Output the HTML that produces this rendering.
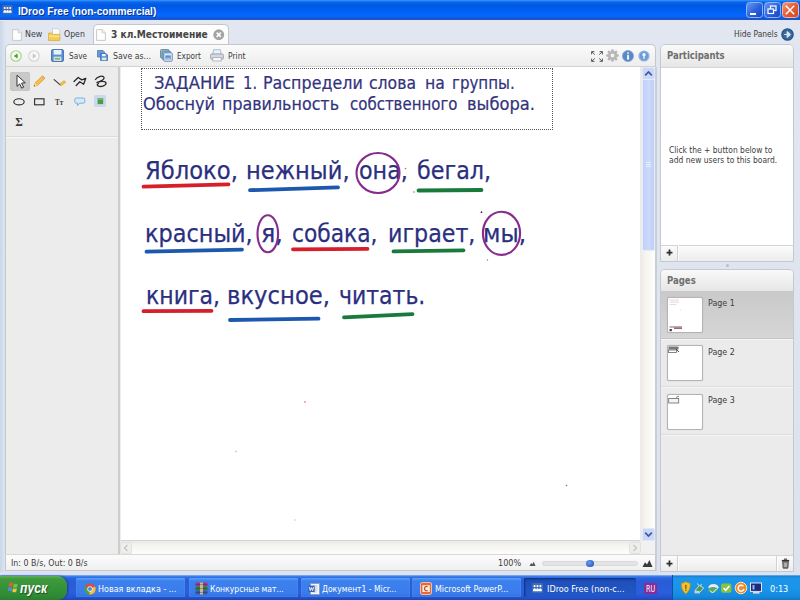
<!DOCTYPE html>
<html lang="ru">
<head>
<meta charset="utf-8">
<title>IDroo Free (non-commercial)</title>
<style>
html,body{margin:0;padding:0;}
body{width:800px;height:600px;overflow:hidden;position:relative;background:#dfe5ef;font-family:"DejaVu Sans Condensed","Liberation Sans",sans-serif;font-size:9px;color:#333;}
.a{position:absolute;white-space:nowrap;}
.l{position:absolute;white-space:nowrap;transform-origin:0 0;}
.t{position:absolute;white-space:nowrap;line-height:12px;height:12px;}
#titlebar{left:0;top:0;width:800px;height:20px;background:linear-gradient(#3b97ff 0,#0a68ee 2px,#0058e0 5px,#005ff0 10px,#0568ff 16px,#0a5ae0 18px,#1a4ec4 19px,#2a5acc 20px);}
#titletext{left:17px;top:3px;color:#fff;font-family:"Liberation Sans",sans-serif;font-weight:bold;font-size:10.5px;line-height:14px;text-shadow:1px 1px 1px #0a2a80;}
.wb{position:absolute;top:1.5px;width:16.5px;height:16.5px;border-radius:3.5px;box-sizing:border-box;border:1.2px solid #8fb4f6;background:linear-gradient(135deg,#6a98f2,#2a60dc 55%,#1a48c4);}
#appbg{left:0;top:20px;width:800px;height:555px;background:linear-gradient(#e1e6f0,#dde3ee);}
#leftedge{left:0;top:21px;width:5px;height:551px;background:linear-gradient(90deg,#c9d7e9,#dde5ef);}
#toolbar{left:5px;top:44px;width:651px;height:23px;box-sizing:border-box;border:1px solid #c2c7ce;border-bottom:1px solid #d2d2d2;border-radius:5px 5px 0 0;background:linear-gradient(#fbfbfb,#ededed);}
#tab{left:93px;top:24px;width:136px;height:21px;box-sizing:border-box;border:1px solid #c2c7ce;border-bottom:none;border-radius:5px 5px 0 0;background:linear-gradient(#ffffff,#fafafa);}
#leftpanel{left:5px;top:67px;width:115px;height:487px;background:#ececec;border-left:1px solid #c4c9d0;border-right:2px solid #cdcdcd;box-sizing:border-box;}
#canvas{left:120px;top:67px;width:520px;border-left:1px solid #ededed;height:474px;background:#fff;border-bottom:1px solid #d4d4d4;box-sizing:border-box;}
#vscroll{left:640px;top:67px;width:15px;height:474px;background:linear-gradient(90deg,#ebeae7,#f6f5f1 40%,#fdfdfb);}
#hscroll{left:120px;top:541px;width:521px;height:13px;background:linear-gradient(#ebeae7,#f6f5f1 40%,#fdfdfb);}
#status{left:5px;top:554px;width:651px;height:17px;box-sizing:border-box;border:1px solid #c4c9d0;border-top:1px solid #d8d8d8;background:linear-gradient(#fcfcfc,#f0f0f0);}
.panel{position:absolute;left:660px;width:134px;box-sizing:border-box;border:1px solid #c4c9d0;background:#ebebeb;overflow:hidden;}
.phead{position:absolute;left:0;top:0;width:100%;height:22px;background:linear-gradient(#f9f9f9,#e6e6e6);border-bottom:1px solid #d6d6d6;box-sizing:border-box;}
.pfoot{position:absolute;left:0;bottom:0;width:100%;height:16px;background:linear-gradient(#fbfbfb,#ececec);border-top:1px solid #d4d4d4;box-sizing:border-box;}
.ph{position:absolute;left:7px;top:5px;font-family:"Liberation Sans",sans-serif;font-weight:bold;font-size:10px;line-height:12px;color:#666;}
#taskbar{left:0;top:575px;width:800px;height:25px;background:linear-gradient(#a8c4f4 0,#3f86ee 1px,#2a66e0 3px,#2a5cd8 6px,#2b5edc 18px,#2450c8 23px,#1f46b4 25px);}
#start{left:0;top:576px;width:67px;height:24px;border-radius:0 9px 9px 0;background:linear-gradient(#5fb05a 0,#3f9a3c 3px,#36923a 12px,#2f8a34 20px,#2a7a30 25px);box-shadow:1px 0 2px #1a3f90;}
.tb{position:absolute;top:578px;height:19px;width:109px;border-radius:2px;background:linear-gradient(#5a9cf4,#3c80ee 3px,#3a7cec 15px,#3272e0);box-shadow:inset 0 0 1px #8fbcff;}
.tb.act{background:linear-gradient(#1c47aa,#1f50bc 4px,#2258c8);box-shadow:inset 1px 1px 2px #10307a;}
.tbt{position:absolute;top:3px;left:23px;color:#fff;font-size:9px;line-height:12px;white-space:nowrap;}
#tray{left:672px;top:575px;width:128px;height:25px;background:linear-gradient(#9cc8f0 0,#1a7ed4 1px,#1c96ea 3px,#1a94e8 14px,#158ae0 21px,#1278c8 25px);border-left:1px solid #0a4fa8;box-sizing:border-box;}

.hd{position:absolute;white-space:nowrap;transform-origin:0 0;font-size:18.2px;line-height:22px;height:22px;color:#33337d;-webkit-text-stroke:0.2px #33337d;}
.w{position:absolute;white-space:nowrap;transform-origin:0 0;font-size:25px;line-height:30px;height:30px;color:#2b2f80;-webkit-text-stroke:0.25px #2b2f80;}
#dotbox{left:141px;top:68px;width:412px;height:62px;box-sizing:border-box;border:1px dotted #555;}
.thumb{position:absolute;left:5.600px;width:36px;height:36px;box-sizing:border-box;border:1px solid #b4b4b4;background:#fff;border-radius:2px;box-shadow:0 0 1px #aaa;overflow:hidden;}
</style>
</head>
<body>
<div class="a" id="appbg"></div>
<div class="a" id="titlebar"></div>
<div class="a" id="leftedge"></div>
<div class="a" id="tab"></div>
<div class="a" id="toolbar"></div>
<!-- title icon and buttons -->
<svg class="a" style="left:2px;top:5px;" width="11" height="9.500" viewBox="0 0 11 10"><rect width="11" height="10" rx="1.2" fill="#3d6cb4"/><circle cx="2.6" cy="3.1" r="1.1" fill="#fff"/><circle cx="5.5" cy="3.1" r="1.1" fill="#fff"/><circle cx="8.4" cy="3.1" r="1.1" fill="#fff"/><path d="M1 8.2q0-3 1.6-3t1.5 1.8q0-1.8 1.4-1.800t1.400 1.800q0-1.800 1.500-1.800t1.600 3z" fill="#fff"/></svg>
<div class="wb" style="left:746px;"></div>
<div class="a" style="left:750px;top:12.500px;width:6px;height:2px;background:#fff;"></div>
<div class="wb" style="left:764px;"></div>
<svg class="a" style="left:767px;top:5px;" width="10" height="10" viewBox="0 0 10 10"><rect x="3.500" y="1" width="5.500" height="4.500" fill="none" stroke="#fff" stroke-width="1.200"/><rect x="1" y="4" width="5.500" height="4.500" fill="#2a5bd8" stroke="#fff" stroke-width="1.200"/></svg>
<div class="wb" style="left:782px;border-color:#f0b8a8;background:linear-gradient(135deg,#f09a78,#e4603a 45%,#d04a22);"></div>
<svg class="a" style="left:785px;top:5px;" width="10" height="10" viewBox="0 0 10 10"><path d="M0.800 0.800l8.400 8.400M9.200 0.800l-8.400 8.400" stroke="#fff" stroke-width="1.500"/></svg>
<!-- tab row icons -->
<svg class="a" style="left:11.500px;top:28.500px;" width="10" height="12" viewBox="0 0 10 12"><path d="M0.6 0.6h5.6l3.2 3.2v7.600h-8.800z" fill="#fdfdfd" stroke="#c4c4c4" stroke-width="0.9"/><path d="M6.200 0.600v3.200h3.200" fill="#ececec" stroke="#c4c4c4" stroke-width="0.7"/></svg>
<svg class="a" style="left:48px;top:28px;" width="13" height="13" viewBox="0 0 13 13"><path d="M4.500 0.600h5l2.200 2.200v5.500h-7.200z" fill="#fdfdfd" stroke="#c8c8c8" stroke-width="0.800"/><path d="M0.600 5.200h3.600l1 1.200h6.600v6h-11.200z" fill="#f6cf5a" stroke="#d9a92a" stroke-width="0.800"/><path d="M0.900 8.200h10.600" stroke="#fbe6a0" stroke-width="1.200"/></svg>
<svg class="a" style="left:95.500px;top:28.500px;" width="10" height="12" viewBox="0 0 10 12"><path d="M0.6 0.6h5.6l3.2 3.2v7.600h-8.800z" fill="#fdfdfd" stroke="#c4c4c4" stroke-width="0.9"/><path d="M6.200 0.600v3.200h3.200" fill="#ececec" stroke="#c4c4c4" stroke-width="0.7"/></svg>
<svg class="a" style="left:213px;top:28.700px;" width="11.500" height="11.500" viewBox="0 0 12 12"><circle cx="6" cy="6" r="5.700" fill="#a4a4a4"/><path d="M3.800 3.800l4.400 4.400M8.200 3.800l-4.400 4.400" stroke="#fff" stroke-width="1.600"/></svg>
<svg class="a" style="left:780.500px;top:27.800px;" width="13" height="13" viewBox="0 0 13 13"><circle cx="6.500" cy="6.500" r="6.300" fill="#2c5688"/><circle cx="6.500" cy="6.500" r="4.800" fill="#3a6a9e"/><path d="M3.200 6.500h4M6.200 3.800l3 2.700-3 2.700z" fill="#dbe6f2" stroke="#dbe6f2" stroke-width="1.200" stroke-linejoin="round"/></svg>
<!-- toolbar icons -->
<svg class="a" style="left:10px;top:49.500px;" width="12" height="12" viewBox="0 0 12 12"><circle cx="6" cy="6" r="5.300" fill="#f2f8ee" stroke="#a6d28c" stroke-width="1.100"/><path d="M7.600 3.400v5.200l-3.800-2.600z" fill="#4a9a3a"/></svg>
<svg class="a" style="left:27.500px;top:49.500px;" width="12" height="12" viewBox="0 0 12 12"><circle cx="6" cy="6" r="5.300" fill="#f6f6f6" stroke="#d4d4d4" stroke-width="1.100"/><path d="M4.800 3.600v4.800l3.400-2.400z" fill="#c4c4c4"/></svg>
<svg class="a" style="left:51px;top:49px;" width="13" height="13" viewBox="0 0 13 13"><rect x="0.500" y="0.500" width="12" height="12" rx="1.500" fill="#5a8fd4" stroke="#3f6fb4" stroke-width="0.900"/><rect x="2.600" y="1" width="7.800" height="4.600" fill="#e8f0fa"/><rect x="2.600" y="7.600" width="7.800" height="4.400" fill="#cfe0cf"/><rect x="4" y="9" width="5" height="1.600" fill="#7ab87a"/></svg>
<svg class="a" style="left:97px;top:50px;" width="11" height="11" viewBox="0 0 11 11"><path d="M0.500 0.500h5.500l1.500 1.500v5h-7z" fill="#6a9ad8" stroke="#4a78b8" stroke-width="0.800"/><path d="M3.500 3.500h5.500l1.500 1.500v5.500h-7z" fill="#5a8fd4" stroke="#3f6fb4" stroke-width="0.800"/><rect x="5" y="4" width="3.600" height="2.200" fill="#eef4fb"/><rect x="4.800" y="7.600" width="4.600" height="2.600" fill="#d8ead8"/></svg>
<svg class="a" style="left:159.500px;top:49px;" width="13" height="13" viewBox="0 0 13 13"><rect x="0.500" y="0.500" width="8.500" height="8.500" rx="1" fill="#9ac49a" stroke="#5a7ab0" stroke-width="0.800"/><rect x="2.200" y="2.200" width="8.500" height="8.500" rx="1" fill="#8ab0de" stroke="#5a7ab0" stroke-width="0.800"/><rect x="3.800" y="3.800" width="8.500" height="8.500" rx="1" fill="#dce8f6" stroke="#5a7ab0" stroke-width="0.800"/><rect x="5.400" y="6.400" width="5.400" height="4" fill="#5a8fd4"/><rect x="6.300" y="8.600" width="3.600" height="1.400" fill="#a8d0a8"/></svg>
<svg class="a" style="left:210px;top:49px;" width="14" height="13" viewBox="0 0 14 13"><path d="M3.600 0.700h6.800l0.800 4.500h-8.400z" fill="#eaf2fa" stroke="#9ab0c8" stroke-width="0.800"/><rect x="0.600" y="5" width="12.800" height="5.200" rx="1.200" fill="#d6dade" stroke="#8f979f" stroke-width="0.800"/><rect x="2.800" y="8.400" width="8.400" height="3.600" fill="#f8f8f8" stroke="#9aa2aa" stroke-width="0.700"/></svg>
<svg class="a" style="left:591px;top:50.500px;" width="12" height="11" viewBox="0 0 12 11"><g stroke="#5a5a5a" stroke-width="1" fill="none"><path d="M0.600 3.400v-2.800h2.800M0.800 0.800l3 2.800"/><path d="M11.400 3.400v-2.800h-2.800M11.200 0.800l-3 2.800"/><path d="M0.600 7.600v2.800h2.800M0.800 10.200l3-2.800"/><path d="M11.400 7.600v2.800h-2.800M11.200 10.200l-3-2.800"/></g></svg>
<svg class="a" style="left:605.500px;top:49px;" width="13" height="13" viewBox="0 0 13 13"><g fill="#b6b6b6"><circle cx="6.500" cy="6.500" r="4.600"/><rect x="5.200" y="0.200" width="2.600" height="12.600" rx="0.800"/><rect x="5.200" y="0.200" width="2.600" height="12.600" rx="0.800" transform="rotate(45 6.500 6.500)"/><rect x="5.200" y="0.200" width="2.600" height="12.600" rx="0.800" transform="rotate(90 6.500 6.500)"/><rect x="5.200" y="0.200" width="2.600" height="12.600" rx="0.800" transform="rotate(135 6.500 6.500)"/></g><circle cx="6.500" cy="6.500" r="1.900" fill="#f2f2f2"/></svg>
<svg class="a" style="left:622px;top:49.500px;" width="12" height="12" viewBox="0 0 12 12"><circle cx="6" cy="6" r="5.600" fill="#5b89c6"/><circle cx="6" cy="6" r="5.600" fill="none" stroke="#86a9da" stroke-width="0.800"/><rect x="5.300" y="2.300" width="1.500" height="1.500" fill="#fff"/><path d="M5.300 4.800h1.500l0.300 4.600h-2.100z" fill="#fff"/></svg>
<svg class="a" style="left:637.500px;top:49.500px;" width="12" height="12" viewBox="0 0 12 12"><circle cx="6" cy="6" r="5.600" fill="#8fb2e0"/><circle cx="6" cy="6" r="4.200" fill="#6e9ad4"/><circle cx="6" cy="4.800" r="1.700" fill="#f4f8fd"/><rect x="5.300" y="6.200" width="1.400" height="2.600" fill="#f4f8fd"/></svg>
<div class="a" id="leftpanel"></div>
<div class="a" style="left:6px;top:136px;width:112px;height:1px;background:#dcdcdc;"></div>
<div class="a" style="left:6px;top:137px;width:112px;height:1px;background:#f8f8f8;"></div>
<div class="a" style="left:10px;top:72px;width:20px;height:19px;border-radius:3px;background:#c9c9c9;box-shadow:inset 0 0 1px #aaa;"></div>
<svg class="a" style="left:6px;top:68px;" width="112" height="64" viewBox="6 68 112 64">
<!-- pointer -->
<path d="M17 75.200v11.200l2.700-2.500 2 4.300 1.900-0.900-2-4.200 3.700-0.300z" fill="#fff" stroke="#333" stroke-width="1" stroke-linejoin="round"/>
<!-- pencil -->
<path d="M34 86.300l1-3.200 7.600-7.300 2.400 2.400-7.700 7.300z" fill="#f2c348" stroke="#d79a2a" stroke-width="0.800" stroke-linejoin="round"/><path d="M34 86.300l1-3.200 2.300 2.400z" fill="#f7e2b8"/><path d="M34 86.300l0.500-1.400 0.900 0.900z" fill="#444"/><path d="M41.600 76.800l2.400 2.400" stroke="#e8a8a0" stroke-width="1.200"/>
<!-- line + pencil -->
<path d="M53.800 79.300l6.800 5.800" stroke="#333" stroke-width="1.100" fill="none"/><path d="M60 85.600l0.700-2.400 3.600-2.600 1.400 1.800-3.600 2.700z" fill="#f2c348" stroke="#d79a2a" stroke-width="0.600"/>
<!-- zigzag -->
<path d="M74 81.500l4.200-4 3.600 2.400 4-1.600-2.200 6-3.800-2.600-3.600 3.800" fill="none" stroke="#2a2a2a" stroke-width="1.300" stroke-linejoin="round" stroke-linecap="round"/>
<!-- scribble -->
<path d="M95.500 79.500c1.500-2.500 6.500-4.500 8.300-2.300 1.600 2-3.800 4.600-7.300 5.400 3.600-1.600 9-1.800 9.500 0.400 0.500 2.300-4.500 4.200-7.500 3.200-1.800-0.600-1.600-2 0-2.600" fill="none" stroke="#2a2a2a" stroke-width="1.300" stroke-linecap="round"/>
<!-- ellipse, rect -->
<ellipse cx="19" cy="101.800" rx="5.200" ry="3.100" fill="none" stroke="#2a2a2a" stroke-width="1.100"/>
<rect x="34.600" y="98.800" width="9.400" height="6" fill="none" stroke="#2a2a2a" stroke-width="1.100"/>
<!-- bubble -->
<path d="M76.200 98h7.200q1.400 0 1.400 1.400v2.400q0 1.400-1.400 1.400h-3.600l-2.400 2.400 0.300-2.400h-1.500q-1.400 0-1.400-1.400v-2.400q0-1.400 1.400-1.400z" fill="#d4e9f9" stroke="#6fa9de" stroke-width="0.900"/>
<!-- image -->
<rect x="94" y="95" width="12" height="12" rx="1.500" fill="#c9daf0"/><rect x="97.600" y="98.300" width="5.600" height="5.800" fill="#4f9a4a"/><rect x="97.600" y="98.300" width="5.600" height="1.600" fill="#78b86a"/>
<text x="55" y="105.200" font-family="Liberation Serif,serif" font-weight="bold" font-size="8.800" fill="#444" textLength="8.200" lengthAdjust="spacingAndGlyphs">Tт</text>
<text x="15.200" y="125.500" font-family="Liberation Serif,serif" font-weight="bold" font-size="11.500" fill="#3a3a3a">Σ</text>
</svg>
<div class="a" id="canvas"></div>

<div class="a" id="dotbox"></div>
<div class="hd" style="left:154.0px;top:71.7px;transform:scaleX(1.006)">ЗАДАНИЕ</div>
<div class="hd" style="left:242.8px;top:71.7px;transform:scaleX(0.908)">1.</div>
<div class="hd" style="left:263.2px;top:71.7px;transform:scaleX(0.973)">Распредели</div>
<div class="hd" style="left:369.0px;top:71.7px;transform:scaleX(0.957)">слова</div>
<div class="hd" style="left:424.5px;top:71.7px;transform:scaleX(0.958)">на</div>
<div class="hd" style="left:452.1px;top:71.7px;transform:scaleX(0.920)">группы.</div>
<div class="hd" style="left:142.7px;top:92.7px;transform:scaleX(0.986)">Обоснуй</div>
<div class="hd" style="left:222.0px;top:92.7px;transform:scaleX(0.972)">правильность</div>
<div class="hd" style="left:350.3px;top:92.7px;transform:scaleX(0.916)">собственного</div>
<div class="hd" style="left:467.0px;top:92.7px;transform:scaleX(0.995)">выбора.</div>
<div class="w" style="left:145.3px;top:156.0px;transform:scaleX(1.008)">Яблоко,</div>
<div class="w" style="left:246.0px;top:156.0px;transform:scaleX(1.005)">нежный,</div>
<div class="w" style="left:358.5px;top:156.0px;transform:scaleX(0.989)">она,</div>
<div class="w" style="left:416.5px;top:156.0px;transform:scaleX(0.990)">бегал,</div>
<div class="w" style="left:145.0px;top:218.8px;transform:scaleX(0.995)">красный,</div>
<div class="w" style="left:260.9px;top:218.8px;transform:scaleX(1.056)">я,</div>
<div class="w" style="left:292.0px;top:218.8px;transform:scaleX(0.969)">собака,</div>
<div class="w" style="left:388.0px;top:218.8px;transform:scaleX(0.986)">играет,</div>
<div class="w" style="left:483.4px;top:218.8px;transform:scaleX(1.026)">мы,</div>
<div class="w" style="left:145.5px;top:281.4px;transform:scaleX(0.979)">книга,</div>
<div class="w" style="left:226.5px;top:281.4px;transform:scaleX(1.010)">вкусное,</div>
<div class="w" style="left:339.4px;top:281.4px;transform:scaleX(0.978)">читать.</div>
<svg class="a" style="left:119px;top:67px;" width="522" height="474" viewBox="119 67 522 474">
<g fill="none" stroke-linecap="round" stroke-width="3.8">
<path d="M143.5 186.6 L228.5 184.4" stroke="#d61f2b"/>
<path d="M250 190.2 L338 187.4" stroke="#1c58ae"/>
<path d="M418.5 190.5 L481.5 190" stroke="#1a7a3c"/>
<path d="M146.5 251.6 L242 249.6" stroke="#1c58ae"/>
<path d="M293 249.3 L367.5 248.8" stroke="#d61f2b"/>
<path d="M393.5 251.4 L463.5 250.4" stroke="#1a7a3c"/>
<path d="M143.5 311.2 L211.5 310.8" stroke="#d61f2b"/>
<path d="M230 320 L318.5 318.6" stroke="#1c58ae"/>
<path d="M344 317.4 L412.5 314.2" stroke="#1a7a3c"/>
</g>
<g fill="none" stroke="#872c8e" stroke-width="2.1">
<ellipse cx="378" cy="173" rx="21.5" ry="20"/>
<ellipse cx="267.8" cy="233.8" rx="10.3" ry="18.5"/>
<ellipse cx="501.5" cy="233.3" rx="18.6" ry="21.6"/>
</g>
<circle cx="481.5" cy="212.2" r="0.9" fill="#3a2a5a"/>
<circle cx="405.5" cy="168.5" r="0.8" fill="#8a8a30"/>
<circle cx="414" cy="192" r="0.8" fill="#8a8a30"/>
<circle cx="487.5" cy="260" r="0.7" fill="#a070a0"/>
<circle cx="305" cy="402" r="0.8" fill="#e05060"/>
<circle cx="236" cy="451.500" r="0.7" fill="#b0a0b0"/>
<circle cx="295" cy="520" r="0.7" fill="#c0b0b0"/>
<circle cx="566.500" cy="485.500" r="0.8" fill="#777"/>
</svg>
<div class="a" id="vscroll"></div>
<div class="a" style="left:655px;top:67px;width:2px;height:504px;background:#c9cfd7;"></div>
<div class="a" style="left:642px;top:67px;width:13px;height:13px;box-sizing:border-box;background:#c9d7fb;border:1px solid #dfe7fc;border-radius:2px;"></div>
<svg class="a" style="left:644px;top:70px;" width="9" height="7" viewBox="0 0 9 7"><path d="M1.2 5.3L4.5 2l3.3 3.3" fill="none" stroke="#44588f" stroke-width="1.7"/></svg>
<div class="a" style="left:643px;top:80px;width:11px;height:170px;background:linear-gradient(90deg,#c1d0f8,#cbd9fc 50%,#bfcff6);border-radius:1px;box-shadow:0 0 0 1px #e6ecfb;"></div>
<div class="a" style="left:646px;top:162px;width:5px;height:1px;background:#e8eefc;box-shadow:0 2px 0 #e8eefc,0 4px 0 #e8eefc;"></div>
<div class="a" style="left:642px;top:528px;width:13px;height:13px;box-sizing:border-box;background:#c9d7fb;border:1px solid #dfe7fc;border-radius:2px;"></div>
<svg class="a" style="left:644px;top:531px;" width="9" height="7" viewBox="0 0 9 7"><path d="M1.2 1.7L4.5 5l3.3-3.3" fill="none" stroke="#44588f" stroke-width="1.7"/></svg>
<div class="a" id="hscroll"></div>
<div class="a" style="left:120px;top:542px;width:12px;height:12px;box-sizing:border-box;background:#eeeeec;border:1px solid #e2e2de;border-radius:2px;"></div>
<svg class="a" style="left:123px;top:544px;" width="6" height="8" viewBox="0 0 6 8"><path d="M4.5 1L1.5 4l3 3" fill="none" stroke="#c6c6c0" stroke-width="1.3"/></svg>
<div class="a" style="left:629px;top:542px;width:12px;height:12px;box-sizing:border-box;background:#eeeeec;border:1px solid #e2e2de;border-radius:2px;"></div>
<svg class="a" style="left:632px;top:544px;" width="6" height="8" viewBox="0 0 6 8"><path d="M1.5 1l3 3-3 3" fill="none" stroke="#c6c6c0" stroke-width="1.3"/></svg>
<div class="a" style="left:641px;top:541px;width:14px;height:13px;background:#f1f1ef;"></div>
<div class="a" id="status"></div>
<svg class="a" style="left:529px;top:560px;" width="7" height="6" viewBox="0 0 7 6"><path d="M0.5 6L2.2 3 3.300 4.200 4.800 1.800 6.500 6z" fill="#555"/></svg>
<div class="a" style="left:542px;top:561px;width:96px;height:5px;box-sizing:border-box;border-radius:3px;background:#e4e4e4;border:1px solid #d9d9d9;"></div>
<div class="a" style="left:586px;top:559.5px;width:7.5px;height:7.5px;border-radius:4px;background:radial-gradient(circle at 40% 35%,#6a9af0,#2f62c8 70%);"></div>
<svg class="a" style="left:641.5px;top:558px;" width="11" height="9" viewBox="0 0 11 9"><path d="M0.500 9L3 4.200 5 6.500 7.400 2 10.500 9z" fill="#3a3a3a"/></svg>
<div class="panel" id="ppart" style="top:44px;height:218px;border-radius:5px 5px 0 0;">
<div class="a" style="left:0;top:23px;width:132px;height:178px;background:#fff;"></div>
<div class="phead" style="height:23px;"></div><div class="pfoot"></div>
<div class="a" style="left:16px;bottom:0;width:1px;height:16px;background:#d0d0d0;"></div>
<div class="a" style="left:17px;bottom:0;width:1px;height:16px;background:#fff;"></div>
<svg class="a" style="left:5px;top:204px;" width="7" height="7" viewBox="0 0 8 8"><path d="M4 0.6V7.4M0.6 4H7.4" stroke="#2f2f2f" stroke-width="2" fill="none"/></svg>
</div>
<div class="a" style="left:726px;top:264px;width:3px;height:3px;border-radius:2px;background:#b8c0cc;"></div>
<div class="a" style="left:401px;top:543px;width:0;height:0;"></div>
<div class="panel" id="ppages" style="top:269px;height:303px;border-radius:5px 5px 0 0;">
<div class="phead" style="height:22px;"></div><div class="pfoot"></div>
<div class="a" style="left:0;top:21px;width:132px;height:48px;background:linear-gradient(#c9c9c9,#d6d6d6);border-bottom:1px solid #c4c4c4;box-sizing:border-box;"></div>
<div class="a" style="left:0;top:69px;width:132px;height:48px;border-top:1px solid #f6f6f6;border-bottom:1px solid #dcdcdc;box-sizing:border-box;"></div>
<div class="a" style="left:0;top:117px;width:132px;height:48px;border-top:1px solid #f6f6f6;border-bottom:1px solid #dcdcdc;box-sizing:border-box;"></div>
<div class="a" style="left:0;top:165px;width:132px;height:1px;background:#f6f6f6;"></div>
<div class="thumb" style="top:27.3px;"><svg width="34" height="34" viewBox="0 0 34 34"><rect x="1" y="1.500" width="10" height="1" fill="#ecd4e6"/><rect x="2" y="3.600" width="9" height="1" fill="#e4cfe8"/><rect x="1.500" y="6" width="7" height="1" fill="#e4dcec"/><rect x="12" y="11.500" width="1" height="1" fill="#e4dce4"/><rect x="1.500" y="28.300" width="12.500" height="1.300" fill="#b08090"/><rect x="6" y="29.600" width="8" height="1.200" fill="#7a4a58"/><rect x="1.500" y="31" width="2.400" height="2.200" fill="#444"/></svg></div>
<div class="thumb" style="top:75.3px;"><svg width="34" height="34" viewBox="0 0 34 34"><rect x="0.5" y="0.5" width="10" height="3" fill="#777"/><rect x="0.5" y="4" width="8" height="2.5" fill="none" stroke="#666" stroke-width="0.8"/><path d="M8 3l3 3" stroke="#444" stroke-width="1"/></svg></div>
<div class="thumb" style="top:123.5px;"><svg width="34" height="34" viewBox="0 0 34 34"><rect x="0.7" y="3.5" width="10" height="4.5" fill="#f4f4f4" stroke="#666" stroke-width="0.8"/><path d="M8 2.5l3-1.5" stroke="#555" stroke-width="0.8"/></svg></div>
<div class="a" style="left:16px;bottom:0;width:1px;height:15px;background:#d0d0d0;"></div>
<div class="a" style="left:17px;bottom:0;width:1px;height:15px;background:#fff;"></div>
<div class="a" style="left:115px;bottom:0;width:1px;height:15px;background:#d0d0d0;"></div>
<div class="a" style="left:116px;bottom:0;width:1px;height:15px;background:#fff;"></div>
<svg class="a" style="left:5px;top:290px;" width="7" height="7" viewBox="0 0 8 8"><path d="M4 0.6V7.4M0.6 4H7.4" stroke="#2f2f2f" stroke-width="2" fill="none"/></svg>
<svg class="a" style="left:120px;top:288px;" width="9" height="11" viewBox="0 0 9 11"><path d="M3 1.2h3" stroke="#444" stroke-width="1.2"/><path d="M0.8 2.6h7.4" stroke="#333" stroke-width="1.4"/><path d="M1.6 3.6h5.8l-0.5 6.6h-4.8z" fill="#777" stroke="#444" stroke-width="0.8"/><path d="M3.3 4.6v4.4M4.5 4.6v4.4M5.7 4.6v4.4" stroke="#ddd" stroke-width="0.6"/></svg>
</div>
<div class="a" id="taskbar"></div>
<div class="a" id="start"></div>
<svg class="a" style="left:8px;top:581px;" width="11" height="13" viewBox="0 0 11 13">
<path d="M1.2 2.2q2-1.2 3.8 0l-0.7 3.6q-1.8-1.1-3.8 0z" fill="#e8583a"/>
<path d="M5.8 2.6q2 1.2 3.9 0l-0.7 3.6q-1.9 1.1-3.9 0z" fill="#7cc04a"/>
<path d="M0.4 6.8q2-1.2 3.8 0l-0.7 3.6q-1.8-1.1-3.8 0z" fill="#4a8ee8"/>
<path d="M5 7.2q2 1.2 3.9 0l-0.7 3.6q-1.9 1.1-3.9 0z" fill="#f0c83a"/>
</svg>
<div class="tb" style="left:75.5px;"></div>
<div class="tb" style="left:188.5px;"></div>
<div class="tb" style="left:300.5px;"></div>
<div class="tb" style="left:412px;"></div>
<div class="tb act" style="left:524px;width:112px;"></div>
<!-- chrome -->
<svg class="a" style="left:83.5px;top:583px;" width="12" height="12" viewBox="0 0 12 12"><circle cx="6" cy="6" r="5.6" fill="#e04a3a"/><path d="M6 6L1.2 3.2A5.6 5.6 0 0 0 5.2 11.55z" fill="#38a852"/><path d="M6 6L5.2 11.55A5.6 5.6 0 0 0 10.9 3.3z" fill="#f4c430"/><path d="M6 6L10.9 3.3A5.6 5.6 0 0 0 1.2 3.2z" fill="#e04a3a"/><circle cx="6" cy="6" r="2.7" fill="#f4f4f4"/><circle cx="6" cy="6" r="2" fill="#4a8af0"/></svg>
<!-- winrar -->
<svg class="a" style="left:194.5px;top:582px;" width="13" height="13" viewBox="0 0 13 13"><rect x="0.5" y="0.5" width="12" height="4" rx="1" fill="#9a3a8a"/><rect x="0.5" y="4.5" width="12" height="4" rx="1" fill="#3a7a3a"/><rect x="0.5" y="8.5" width="12" height="4" rx="1" fill="#3a5aa8"/><rect x="5" y="0.5" width="3" height="12" fill="#c8b890"/><path d="M0.5 2.5h12M0.5 6.5h12M0.5 10.5h12" stroke="#222" stroke-width="0.6" opacity="0.5"/></svg>
<!-- word -->
<svg class="a" style="left:308px;top:582.5px;" width="12" height="12" viewBox="0 0 12 12"><rect x="2.5" y="0.5" width="9" height="11" fill="#f4f6fb" stroke="#8898b8" stroke-width="0.8"/><path d="M4.5 3h5M4.5 5h5M4.5 7h5M4.5 9h4" stroke="#9ab" stroke-width="0.7"/><rect x="0.3" y="2.6" width="6.4" height="6.4" fill="#3a62b8"/><path d="M1.3 4l1 3.6 1.1-3 1.1 3 1-3.6" fill="none" stroke="#fff" stroke-width="0.9"/></svg>
<!-- ppt -->
<svg class="a" style="left:419.5px;top:582px;" width="12" height="13" viewBox="0 0 12 13"><rect x="0.5" y="0.5" width="11" height="12" rx="1.6" fill="#e8683a" stroke="#f6c8a8" stroke-width="0.9"/><rect x="2.4" y="3.2" width="7.4" height="6.8" fill="#f8ece0"/><path d="M7.6 4.6a2.2 2.2 0 1 0 0 4" fill="none" stroke="#d04a1a" stroke-width="1.3"/></svg>
<!-- idroo -->
<svg class="a" style="left:532px;top:583px;" width="11" height="10" viewBox="0 0 11 10"><rect width="11" height="10" rx="1.2" fill="#3d6cb4"/><circle cx="2.6" cy="3.1" r="1.1" fill="#fff"/><circle cx="5.5" cy="3.1" r="1.1" fill="#fff"/><circle cx="8.4" cy="3.1" r="1.1" fill="#fff"/><path d="M1 8.2q0-3 1.6-3t1.5 1.8q0-1.8 1.4-1.8t1.4 1.8q0-1.8 1.5-1.8t1.6 3z" fill="#fff"/></svg>
<div class="a" style="left:643.5px;top:583px;width:13.5px;height:10.5px;background:#8a2a96;border-radius:1px;"></div>
<div class="a" id="tray"></div>
<!-- tray icons -->
<svg class="a" style="left:680px;top:581px;" width="84" height="14" viewBox="0 0 84 14">
<path d="M5.8 0.8l4.6 1.8q0 7-4.6 10.4Q1.2 9.600 1.200 2.600z" fill="#f2c12e" stroke="#b88a10" stroke-width="0.7"/><rect x="5.200" y="3.800" width="1.3" height="4" fill="#7a5a10"/><rect x="5.200" y="8.600" width="1.3" height="1.3" fill="#7a5a10"/>
<path d="M15 9.500l4.500-5 4.200 2.400-4.500 5z" fill="#4a9a4a" stroke="#e8f0e8" stroke-width="0.8"/><path d="M17 2.500l2.200 2M21.500 3l-1 2" stroke="#ddd" stroke-width="1"/><rect x="14.500" y="9.800" width="5" height="2.600" fill="#c8ccd8"/>
<ellipse cx="33.500" cy="6.200" rx="5" ry="3.200" fill="#e8eef4"/><ellipse cx="33" cy="8.800" rx="4.600" ry="2.800" fill="#58a868"/><path d="M30 9.500l2.500 2.500 4-4" stroke="#fff" stroke-width="1" fill="none"/>
<rect x="41" y="2.400" width="10.400" height="9.400" rx="2" fill="#86c440"/><path d="M43.500 7l2.200 2.300 3.600-4.300" stroke="#fff" stroke-width="1.6" fill="none"/>
<circle cx="61" cy="7" r="5.800" fill="#f08a2a" stroke="#fbe0c0" stroke-width="1"/><path d="M63.400 5.200a3 3 0 1 0 0.600 2.800" stroke="#fff" stroke-width="1.500" fill="none"/>
<rect x="70.500" y="2" width="11" height="8.400" fill="#1c2c7c" stroke="#dfe6f4" stroke-width="1"/><rect x="72.500" y="4" width="2" height="4.500" fill="#9ab0f0"/><rect x="73" y="11" width="6.500" height="1.600" fill="#d8dce8"/>
</svg>
<div class="l" style="left:17.5px;top:3.9px;font-size:10.8px;line-height:14px;height:14px;transform:scaleX(0.937);font-family:'Liberation Sans',sans-serif;font-weight:bold;color:#fff;text-shadow:1px 1px 0 #0a2f8c;">IDroo Free (non-commercial)</div>
<div class="l" style="left:25.0px;top:27.2px;font-size:8.8px;line-height:14px;height:14px;transform:scaleX(1.000);color:#3c3c3c;">New</div>
<div class="l" style="left:63.5px;top:27.2px;font-size:8.8px;line-height:14px;height:14px;transform:scaleX(0.986);color:#3c3c3c;">Open</div>
<div class="l" style="left:111.0px;top:27.7px;font-size:9.6px;line-height:14px;height:14px;transform:scaleX(1.054);font-weight:bold;color:#444;">3 кл.Местоимение</div>
<div class="l" style="left:69.4px;top:49.4px;font-size:8.8px;line-height:14px;height:14px;transform:scaleX(0.926);color:#3c3c3c;">Save</div>
<div class="l" style="left:113.0px;top:49.4px;font-size:8.8px;line-height:14px;height:14px;transform:scaleX(0.989);color:#3c3c3c;">Save as...</div>
<div class="l" style="left:177.0px;top:49.4px;font-size:8.8px;line-height:14px;height:14px;transform:scaleX(0.923);color:#3c3c3c;">Export</div>
<div class="l" style="left:227.7px;top:49.4px;font-size:8.8px;line-height:14px;height:14px;transform:scaleX(0.961);color:#3c3c3c;">Print</div>
<div class="l" style="left:734.0px;top:27.0px;font-size:8.8px;line-height:14px;height:14px;transform:scaleX(0.948);color:#3c3c3c;">Hide Panels</div>
<div class="l" style="left:666.8px;top:48.9px;font-size:10px;line-height:14px;height:14px;transform:scaleX(0.942);font-weight:bold;color:#6e6e6e;">Participants</div>
<div class="l" style="left:666.8px;top:274.0px;font-size:10px;line-height:14px;height:14px;transform:scaleX(0.948);font-weight:bold;color:#6e6e6e;">Pages</div>
<div class="l" style="left:669.0px;top:143.3px;font-size:8.6px;line-height:14px;height:14px;transform:scaleX(0.975);color:#3c3c3c;">Click the + button below to</div>
<div class="l" style="left:669.0px;top:152.7px;font-size:8.6px;line-height:14px;height:14px;transform:scaleX(0.981);color:#3c3c3c;">add new users to this board.</div>
<div class="l" style="left:708.0px;top:296.0px;font-size:8.8px;line-height:14px;height:14px;transform:scaleX(1.000);color:#3c3c3c;">Page 1</div>
<div class="l" style="left:708.0px;top:344.5px;font-size:8.8px;line-height:14px;height:14px;transform:scaleX(1.000);color:#3c3c3c;">Page 2</div>
<div class="l" style="left:708.0px;top:393.0px;font-size:8.8px;line-height:14px;height:14px;transform:scaleX(1.000);color:#3c3c3c;">Page 3</div>
<div class="l" style="left:11.0px;top:555.7px;font-size:8.8px;line-height:14px;height:14px;transform:scaleX(1.000);color:#3c3c3c;">In: 0 B/s, Out: 0 B/s</div>
<div class="l" style="left:498.0px;top:555.8px;font-size:8.8px;line-height:14px;height:14px;transform:scaleX(1.024);color:#3c3c3c;">100%</div>
<div class="l" style="left:20.2px;top:577.6px;font-size:14px;line-height:20px;height:20px;transform:scaleX(0.869);font-family:'Liberation Sans',sans-serif;font-weight:bold;font-style:italic;color:#fff;text-shadow:1px 1px 1px #1a4a1a;">пуск</div>
<div class="l" style="left:97.5px;top:582.3px;font-size:8.8px;line-height:14px;height:14px;transform:scaleX(1.013);color:#fff;">Новая вкладка - ...</div>
<div class="l" style="left:210.0px;top:582.3px;font-size:8.8px;line-height:14px;height:14px;transform:scaleX(0.967);color:#fff;">Конкурсные мат...</div>
<div class="l" style="left:322.4px;top:582.3px;font-size:8.8px;line-height:14px;height:14px;transform:scaleX(0.962);color:#fff;">Документ1 - Micr...</div>
<div class="l" style="left:434.6px;top:582.3px;font-size:8.8px;line-height:14px;height:14px;transform:scaleX(0.999);color:#fff;">Microsoft PowerP...</div>
<div class="l" style="left:547.3px;top:582.3px;font-size:8.8px;line-height:14px;height:14px;transform:scaleX(1.025);color:#fff;">IDroo Free (non-c...</div>
<div class="l" style="left:645.8px;top:581.5px;font-size:8.8px;line-height:14px;height:14px;transform:scaleX(0.818);color:#fff;">RU</div>
<div class="l" style="left:769.5px;top:582.3px;font-size:8.8px;line-height:14px;height:14px;transform:scaleX(1.029);color:#fff;">0:13</div>
</body>
</html>
